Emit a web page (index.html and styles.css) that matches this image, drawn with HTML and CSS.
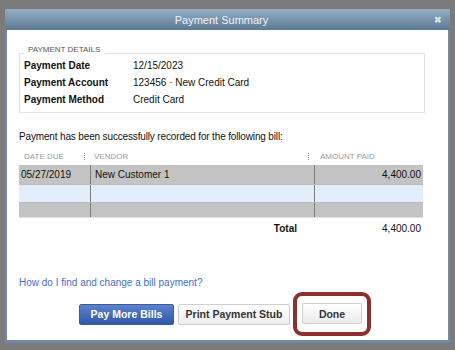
FILE: index.html
```html
<!DOCTYPE html>
<html>
<head>
  <meta charset='utf8'>
  <title>Payment Summary</title>
  <link rel="stylesheet" href="styles.css">
</head>
<body>
  <div class='dialog'>
    <div class='titlebar'>
      <span class='title'>Payment Summary</span>
      <span class='close'>&#x2716;</span>
    </div>
    <div class='content'>
      <fieldset class='details'>
        <legend>Payment Details</legend>
        <div class='row'><span class='key'>Payment Date</span><span>12/15/2023</span></div>
        <div class='row'><span class='key'>Payment Account</span><span>123456 &middot; New Credit Card</span></div>
        <div class='row'><span class='key'>Payment Method</span><span>Credit Card</span></div>
      </fieldset>

      <p class='message'>Payment has been successfully recorded for the following bill:</p>

      <div class='grid'>
        <div class='head'>
          <span class='c-date'>Date Due</span>
          <span class='c-vendor sep'>Vendor</span>
          <span class='c-amount sep'>Amount Paid</span>
        </div>
        <div class='line gray'>
          <span class='c-date'>05/27/2019</span>
          <span class='c-vendor'>New Customer 1</span>
          <span class='c-amount num'>4,400.00</span>
        </div>
        <div class='line blue'>
          <span class='c-date'></span>
          <span class='c-vendor'></span>
          <span class='c-amount'></span>
        </div>
        <div class='line gray short'>
          <span class='c-date'></span>
          <span class='c-vendor'></span>
          <span class='c-amount'></span>
        </div>
        <div class='total'>
          <span class='total-label'>Total</span>
          <span class='total-value'>4,400.00</span>
        </div>
      </div>

      <a class='help' href='#'>How do I find and change a bill payment?</a>

      <div class='actions'>
        <button class='btn primary'>Pay More Bills</button>
        <button class='btn'>Print Payment Stub</button>
        <span class='ring'><button class='btn done'>Done</button></span>
      </div>
    </div>
  </div>
</body>
</html>
```

FILE: styles.css
```css
html, body {
  margin: 0;
  padding: 0;
}
body {
  background: #7b7b7b;
  font-family: "Liberation Sans", Arial, sans-serif;
  font-size: 10px;
  color: #111;
  height: 350px;
  overflow: hidden;
}
.dialog {
  margin: 9px 0 0 5px;
  width: 441px;
  border: 2px solid #6f8aa3;
  border-top: 0;
  border-bottom-width: 3px;
  background: #fff;
}
.titlebar {
  height: 21px;
  background: linear-gradient(#93adc4, #5d7994);
  display: flex;
  align-items: center;
  margin: 0 -2px;
  padding: 0 8px 0 10px;
  border-radius: 2px 2px 0 0;
}
.title {
  flex: 1;
  text-align: center;
  color: #eef3f8;
  font-size: 11px;
  padding-right: 6px;
}
.close {
  color: #d8e2ec;
  font-size: 9px;
  font-weight: bold;
}
.content {
  padding: 15px 23px 0 12px;
  height: 310px;
  box-sizing: border-box;
  display: flex;
  flex-direction: column;
}
.details {
  margin: 0;
  padding: 2px 4px 4px;
  border: 1px solid #e2e2e2;
}
.details legend {
  font-size: 8px;
  text-transform: uppercase;
  color: #555;
  line-height: 10px;
  padding: 0 5px 6px 4px;
  margin: 0 0 -6px;
}
.row {
  line-height: 17px;
  display: flex;
}
.key {
  width: 109px;
  font-weight: bold;
}
.message {
  margin: 17px 0 0;
  line-height: 13px;
  letter-spacing: -0.15px;
}
.grid {
  margin-top: 6px;
  width: 404px;
}
.head {
  display: flex;
  height: 15px;
  align-items: center;
  font-size: 8px;
  text-transform: uppercase;
  color: #9a9a9a;
}
.head .sep {
  position: relative;
}
.head .sep::before {
  content: '';
  position: absolute;
  left: -6px;
  top: 1px;
  height: 7px;
  border-left: 1px dotted #888;
}
.c-date {
  width: 71px;
  padding-left: 4px;
  box-sizing: border-box;
}
.head .c-date {
  padding-left: 5px;
}
.c-vendor {
  width: 224px;
  padding-left: 4px;
  box-sizing: border-box;
}
.c-amount {
  flex: 1;
  padding-right: 2px;
  text-align: right;
}
.head .c-amount {
  text-align: left;
  padding-left: 6px;
}
.line {
  display: flex;
  height: 18px;
  align-items: center;
}
.line span {
  align-self: stretch;
  display: flex;
  align-items: center;
}
.line .c-vendor, .line .c-amount {
  border-left: 1px solid #7c7c7c;
}
.line .c-date {
  padding-left: 2px;
}
.line .num {
  justify-content: flex-end;
}
.gray {
  background: #c3c3c3;
}
.head + .line {
  height: 19px;
  margin-top: 1px;
}
.blue {
  background: #e3eefc;
  border-top: 1px solid #bcbcbc;
  border-bottom: 1px solid #bcbcbc;
  height: 17px;
}
.short {
  height: 14px;
  border-bottom: 1px solid #e2e2e2;
}
.total {
  display: flex;
  margin-top: 4px;
  line-height: 13px;
}
.total-label {
  width: 278px;
  text-align: right;
  font-weight: bold;
}
.total-value {
  flex: 1;
  text-align: right;
  padding-right: 2px;
}
.help {
  margin-top: 41px;
  color: #4a6ccc;
  text-decoration: none;
  line-height: 13px;
  align-self: flex-start;
}
.actions {
  display: flex;
  align-items: center;
  margin: 3px 0 0 60px;
}
.btn {
  font-family: "Liberation Sans", Arial, sans-serif;
  font-size: 10.5px;
  font-weight: bold;
  color: #333;
  height: 21px;
  padding: 0;
  border: 1px solid #cfcfcf;
  border-radius: 2px;
  background: linear-gradient(#ffffff, #ececec);
  width: 112px;
  margin-right: 4px;
}
.btn.primary {
  width: 95px;
  color: #fff;
  border-color: #3a5c9c;
  background: linear-gradient(#5b82cc, #2f58a8);
}
.ring {
  display: inline-flex;
  border: 4px solid #8b2f31;
  border-radius: 9px;
  padding: 7px 5px 8px;
  margin-left: -1px;
}
.btn.done {
  width: 60px;
  margin: 0;
}
```
